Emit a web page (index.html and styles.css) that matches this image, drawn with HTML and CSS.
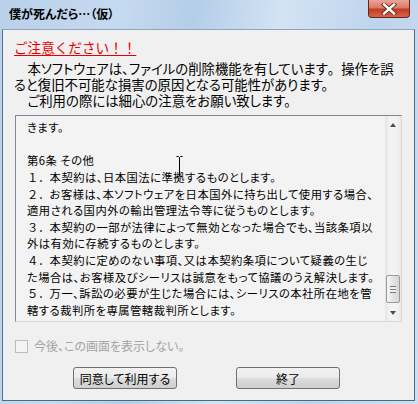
FILE: index.html
```html
<!DOCTYPE html>
<html lang="ja">

<head>
    <meta charset="UTF-8">
    <title>僕が死んだら…（仮）</title>
    <link rel="stylesheet" href="styles.css">
</head>

<body>
    <div class="window">
        <div class="titlebar">
            <span class="title">僕が死んだら…（仮）</span>
            <div class="close-btn">
                <svg width="16" height="12" viewBox="0 0 16 12">
                    <path d="M3 1.5 L13 10.5 M13 1.5 L3 10.5" stroke="#5a2a22" stroke-width="4.2" stroke-linecap="square"/>
                    <path d="M3 1.5 L13 10.5 M13 1.5 L3 10.5" stroke="#fff" stroke-width="2.4" stroke-linecap="square"/>
                </svg>
            </div>
        </div>
        <div class="client">
            <div class="notice">ご注意ください！！</div>
            <div class="intro">
                <div class="line">　本ソフトウェアは、ファイルの削除機能を有しています<span class="wide">。</span>操作を誤</div>
                <div class="line">ると復旧不可能な損害の原因となる可能性があります。</div>
                <div class="line">　ご利用の際には細心の注意をお願い致します。</div>
            </div>
            <div class="terms">
                <div class="terms-text">
                    <div class="line">きます。</div>
                    <div class="line">&nbsp;</div>
                    <div class="line">第6条 その他</div>
                    <div class="line"><span class="num">１．</span>本契約は、日本国法に準拠するものとします。</div>
                    <div class="line"><span class="num">２．</span>お客様は、本ソフトウェアを日本国外に持ち出して使用する場合、</div>
                    <div class="line">適用される国内外の輸出管理法令等に従うものとします。</div>
                    <div class="line"><span class="num">３．</span>本契約の一部が法律によって無効となった場合でも、当該条項以</div>
                    <div class="line">外は有効に存続するものとします。</div>
                    <div class="line"><span class="num">４．</span>本契約に定めのない事項、又は本契約条項について疑義の生じ</div>
                    <div class="line">た場合は、お客様及びシーリスは誠意をもって協議のうえ解決します。</div>
                    <div class="line"><span class="num">５．</span>万一、訴訟の必要が生じた場合には、シーリスの本社所在地を管</div>
                    <div class="line">轄する裁判所を専属管轄裁判所とします。</div>
                </div>
                <div class="scrollbar">
                    <div class="arrow"><span class="tri up"></span></div>
                    <div class="track">
                        <div class="thumb"><span class="grip"></span></div>
                    </div>
                    <div class="arrow"><span class="tri down"></span></div>
                </div>
                <svg class="ibeam" width="7" height="21" viewBox="0 0 7 21">
                    <path d="M0.5 0.5 H2.5 L3.5 1.5 L4.5 0.5 H6.5 M3.5 1.5 V19.5 M0.5 20.5 H2.5 L3.5 19.5 L4.5 20.5 H6.5" stroke="#000" fill="none"/>
                </svg>
            </div>
            <label class="dont-show"><span class="check"></span>今後、この画面を表示しない。</label>
            <div class="buttons">
                <button class="btn">同意して利用する</button>
                <button class="btn">終了</button>
            </div>
        </div>
    </div>
</body>

</html>
```

FILE: styles.css
```css
body {
    margin: 0;
    padding: 0;
    font-family: "Noto Sans CJK JP", "Noto Sans", sans-serif;
    color: #000;
}

.window {
    width: 418px;
    height: 404px;
    display: flex;
    flex-direction: column;
    background: linear-gradient(100deg, #b9d0ea 0%, #c6daef 25%, #b4cde8 40%, #d3e3f4 58%, #bed4ec 78%, #cddff2 100%);
}

.titlebar {
    height: 29px;
    display: flex;
    align-items: flex-start;
    justify-content: space-between;
    flex-shrink: 0;
}

.title {
    margin: 6px 0 0 9px;
    font-size: 12px;
    font-weight: bold;
    line-height: 16px;
    font-feature-settings: "palt";
    color: #000;
}

.close-btn {
    width: 40px;
    height: 17px;
    margin-right: 8px;
    border: 1px solid #6d2218;
    border-top: none;
    border-radius: 0 0 4px 4px;
    background: linear-gradient(#e9a597 0%, #d97a66 45%, #c23c24 55%, #d5654a 100%);
    display: flex;
    align-items: center;
    justify-content: center;
}

.client {
    flex: 1;
    margin: 0 3px 3px 2px;
    border-left: 1px solid #51708f;
    border-right: 1px solid #3f6f80;
    border-bottom: 1px solid #3f6f80;
    border-top: 1px solid #8ea5bd;
    background-color: #f0f0f0;
    padding: 0 0 0 11px;
    display: flex;
    flex-direction: column;
}

.notice {
    margin-top: 9px;
    font-size: 13.6px;
    line-height: 16px;
    color: #e60000;
    text-decoration: underline;
    text-underline-offset: 2px;
    text-decoration-thickness: 1px;
}

.intro {
    margin-top: 6px;
    font-size: 13.4px;
    line-height: 15.75px;
    font-feature-settings: "palt";
}

.wide {
    font-feature-settings: normal;
}

.line {
    white-space: nowrap;
}

.terms {
    position: relative;
    margin: 7px 12px 0 1px;
    height: 205px;
    border: 1px solid #828790;
    border-right-color: #d8d8d8;
    border-bottom-color: #d8d8d8;
    background-color: #f3f3f3;
    display: flex;
    flex-shrink: 0;
}

.terms-text {
    flex: 1;
    padding: 3px 0 0 11px;
    font-size: 11.3px;
    line-height: 16.6px;
    letter-spacing: 0.5px;
    font-feature-settings: "palt";
    overflow: hidden;
}

.num {
    font-feature-settings: normal;
    letter-spacing: 0;
}

.scrollbar {
    width: 16px;
    display: flex;
    flex-direction: column;
    background: linear-gradient(90deg, #e4e4e4, #f3f3f3 30%, #f3f3f3 70%, #e8e8e8);
}

.arrow {
    height: 17px;
    display: flex;
    align-items: center;
    justify-content: center;
}

.tri {
    width: 0;
    height: 0;
    border-left: 3.5px solid transparent;
    border-right: 3.5px solid transparent;
}

.tri.up {
    border-bottom: 4px solid #4d4d4d;
}

.tri.down {
    border-top: 4px solid #4d4d4d;
}

.track {
    flex: 1;
}

.thumb {
    margin: 142px 1px 0 1px;
    height: 26px;
    border: 1px solid #9a9a9a;
    border-radius: 2px;
    background: linear-gradient(90deg, #f6f6f6, #e4e4e4 50%, #d6d6d6);
    display: flex;
    align-items: center;
    justify-content: center;
}

.grip {
    width: 6px;
    height: 5px;
    border-top: 1px solid #777;
    border-bottom: 1px solid #777;
    background: linear-gradient(#f0f0f0 40%, #777 40%, #777 60%, #f0f0f0 60%);
}

.ibeam {
    position: absolute;
    left: 160px;
    top: 40px;
}

.dont-show {
    margin-top: 16px;
    display: flex;
    align-items: center;
    gap: 6px;
    font-size: 12px;
    line-height: 16px;
    color: #a3a3a3;
    font-feature-settings: "palt";
}

.check {
    width: 11px;
    height: 11px;
    margin-left: 1px;
    border: 1px solid #bcbcbc;
    background-color: #f4f4f4;
}

.buttons {
    margin-top: 13px;
    padding-left: 59px;
    display: flex;
    gap: 59px;
}

.btn {
    width: 104px;
    height: 22px;
    padding: 0;
    border: 1px solid #707070;
    border-radius: 3px;
    background: linear-gradient(#f2f2f2 0%, #ebebeb 50%, #dddddd 50%, #cfcfcf 100%);
    font-family: "Noto Sans CJK JP", sans-serif;
    font-size: 12px;
    font-feature-settings: "palt";
    color: #000;
}
```
